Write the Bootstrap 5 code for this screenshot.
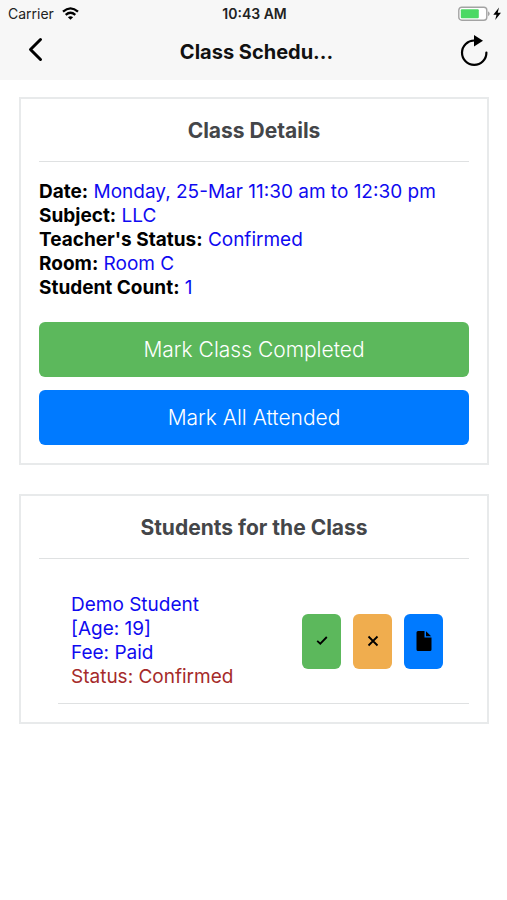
<!DOCTYPE html>
<html lang="en">
<head>
<meta charset="utf-8">
<meta name="viewport" content="width=device-width, initial-scale=1">
<title>Class Schedule</title>
<link href="https://cdn.jsdelivr.net/npm/bootstrap@5.3.0/dist/css/bootstrap.min.css" rel="stylesheet">
<style>
  body { font-family: Inter, "Liberation Sans", sans-serif; font-size: 19px; line-height: 24px; color: #000; background: #fff; }
  svg { display: block; }
  .app-header { background: #f7f7f7; height: 80px; }
  .status-bar { height: 28px; font-size: 14px; line-height: 28px; padding: 0 6px 0 8px; }
  .status-bar .carrier { color: #222; }
  .status-bar .clock { font-weight: 600; color: #222; }
  .title-bar { height: 48px; padding: 0 18px 0 24px; }
  .title-bar h1 { font-size: 20px; line-height: 48px; font-weight: 700; color: #111; }
  .icon-btn { background: none; border: 0; padding: 0; color: #000; }
  main { padding: 17px 18px 0 19px; }
  .panel { border: 2px solid #e8eaeb; padding: 0 18px 18px; margin-bottom: 29px; }
  .panel h2 { font-size: 21px; line-height: 64px; height: 63px; font-weight: 700; color: #444649; border-bottom: 1px solid #dfe1e2; }
  .details { padding: 18px 0 22px; }
  .details dt { font-weight: 700; }
  .details dt, .details dd { display: inline; }
  .info { color: #0f0af0; }
  .confirmed { color: #a52a2a; }
  .buttons { gap: 13px; }
  .action { height: 55px; border: 0; border-radius: 6px; color: #fff; font-size: 21px; font-weight: 300; }
  .green, .green:hover { background: #5cb85c; color: #fff; }
  .blue, .blue:hover { background: #007aff; color: #fff; }
  .amber, .amber:hover { background: #f0ad4e; }
  .student { margin-left: 19px; padding: 34px 26px 14px 13px; border-bottom: 1px solid #dfe1e2; }
  .tiles { gap: 12px; }
  .tile { width: 39px; height: 55px; border: 0; border-radius: 6px; color: #000; }
</style>
</head>
<body>
<header class="app-header">
  <div class="status-bar row g-0">
    <div class="col d-flex align-items-center gap-2">
      <span class="carrier">Carrier</span>
      <svg width="17" height="14" viewBox="0 0 17 14" fill="none" stroke="#000" stroke-width="2.3" aria-hidden="true"><path d="M1 4.600Q8.500-1.800 16 4.600M3.700 7.800Q8.500 3.700 13.300 7.800"/><path d="M8.500 12.800L5.900 10.200Q8.500 8.200 11.100 10.200Z" fill="#000" stroke="none"/></svg>
    </div>
    <div class="col-auto clock">10:43 AM</div>
    <div class="col d-flex align-items-center justify-content-end">
      <svg width="43" height="16" viewBox="0 0 43 16" aria-hidden="true"><rect x=".8" y="1.200" width="28" height="13" rx="3" fill="#fff" stroke="#a3a3a3" stroke-width="1.400"/><rect x="2.800" y="3.200" width="18" height="9" rx="1" fill="#4cd964"/><path d="M30 5.300Q33.500 7.700 30 10.200Z" fill="#a3a3a3"/><path d="M41 1.500L35.300 8.700H38.500L37.200 14L43 6.700H39.700Z"/></svg>
    </div>
  </div>
  <div class="title-bar row g-0 align-items-center">
    <div class="col"><button class="icon-btn" type="button" aria-label="Back"><svg width="22" height="28" viewBox="0 0 22 28" fill="none" stroke="currentColor" stroke-width="3" stroke-linecap="round" stroke-linejoin="round"><path d="M16.500 4.500L6.500 14.500L16.500 24.500"/></svg></button></div>
    <h1 class="col-auto mb-0">Class Schedu...</h1>
    <div class="col d-flex justify-content-end"><button class="icon-btn" type="button" aria-label="Refresh"><svg width="30" height="34" viewBox="0 0 30 34"><path d="M15.500 5.500A12.200 12.200 0 1 0 27.400 17.500" fill="none" stroke="currentColor" stroke-width="2.200" stroke-linecap="round"/><path d="M15 0L24 5.700L15 11.500Z" fill="currentColor"/></svg></button></div>
  </div>
</header>
<main>
  <section class="panel">
    <h2 class="text-center mb-0">Class Details</h2>
    <dl class="details mb-0">
      <div><dt>Date:</dt> <dd class="info m-0">Monday, 25-Mar 11:30 am to 12:30 pm</dd></div>
      <div><dt>Subject:</dt> <dd class="info m-0">LLC</dd></div>
      <div><dt>Teacher's Status:</dt> <dd class="info m-0">Confirmed</dd></div>
      <div><dt>Room:</dt> <dd class="info m-0">Room C</dd></div>
      <div><dt>Student Count:</dt> <dd class="info m-0">1</dd></div>
    </dl>
    <div class="d-grid buttons">
      <button class="btn action green" type="button">Mark Class Completed</button>
      <button class="btn action blue" type="button">Mark All Attended</button>
    </div>
  </section>
  <section class="panel">
    <h2 class="text-center mb-0">Students for the Class</h2>
    <div class="student d-flex justify-content-between align-items-center">
      <div>
        <div class="info">Demo Student</div>
        <div class="info">[Age: 19]</div>
        <div class="info">Fee: Paid</div>
        <div class="confirmed">Status: Confirmed</div>
      </div>
      <div class="d-flex tiles">
        <button class="btn tile green p-0 d-flex align-items-center justify-content-center" type="button" aria-label="Mark attended"><svg width="12" height="12" viewBox="0 0 12 12" fill="none" stroke="#000" stroke-width="1.800"><path d="M1.200 5.800L4.300 8.700L10.800 2"/></svg></button>
        <button class="btn tile amber p-0 d-flex align-items-center justify-content-center" type="button" aria-label="Mark absent"><svg width="12" height="12" viewBox="0 0 12 12" fill="none" stroke="#000" stroke-width="1.800"><path d="M1.500 1.500L10.500 10.500M10.500 1.500L1.500 10.500"/></svg></button>
        <button class="btn tile blue p-0 d-flex align-items-center justify-content-center" type="button" aria-label="Notes"><svg width="16" height="20" viewBox="0 0 16 20" fill="#000"><path d="M2 0H8.500V6.500H15.500V18.500Q15.500 20 14 20H2Q.5 20 .5 18.500V1.500Q.5 0 2 0ZM10 .3L15.200 5.200H10Z"/></svg></button>
      </div>
    </div>
  </section>
</main>
<script src="https://cdn.jsdelivr.net/npm/bootstrap@5.3.0/dist/js/bootstrap.bundle.min.js"></script>
</body>
</html>
